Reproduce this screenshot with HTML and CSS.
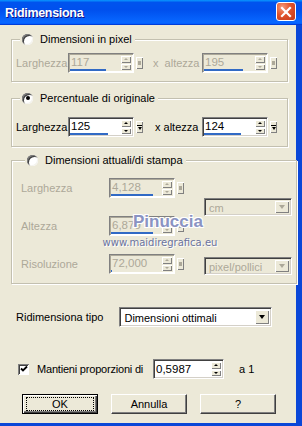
FILE: index.html
```html
<!DOCTYPE html>
<html>
	<head>
		<meta charset="utf-8">
		<title>Ridimensiona</title>
		<link rel="stylesheet" href="styles.css">
	</head>
	<body>
		<div class="window">
			<div class="titlebar">
				<span class="title">Ridimensiona</span>
				<span class="close">
					<svg width="12" height="12" viewBox="0 0 12 12"><path d="M2 2 L10 10 M10 2 L2 10" stroke="#fff" stroke-width="2.2" stroke-linecap="square"/></svg>
				</span>
			</div>
			<div class="dialog">
				<fieldset class="group g1 off">
					<legend><span class="radio"></span>Dimensioni in pixel</legend>
					<div class="row">
						<span class="lbl">Larghezza</span>
						<span class="spinbox">
							<span class="field"><span class="cell"><span class="val">117</span><span class="bar" style="width: 36px;"></span></span><span class="spin"><i class="up"></i><i class="dn"></i></span></span>
							<span class="pop"><i class="sq"></i></span>
						</span>
						<span class="xlbl">x&nbsp;&nbsp;altezza</span>
						<span class="spinbox">
							<span class="field"><span class="cell"><span class="val">195</span><span class="bar" style="width: 39px;"></span></span><span class="spin"><i class="up"></i><i class="dn"></i></span></span>
							<span class="pop"><i class="sq"></i></span>
						</span>
					</div>
				</fieldset>

				<fieldset class="group g2">
					<legend><span class="radio on"></span>Percentuale di originale</legend>
					<div class="row">
						<span class="lbl">Larghezza</span>
						<span class="spinbox">
							<span class="field"><span class="cell"><span class="val">125</span><span class="bar" style="width: 38px;"></span></span><span class="spin"><i class="up"></i><i class="dn"></i></span></span>
							<span class="pop"><i class="tri"></i></span>
						</span>
						<span class="xlbl x2">x altezza</span>
						<span class="spinbox">
							<span class="field"><span class="cell"><span class="val">124</span><span class="bar" style="width: 37px;"></span></span><span class="spin"><i class="up"></i><i class="dn"></i></span></span>
							<span class="pop"><i class="tri"></i></span>
						</span>
					</div>
				</fieldset>

				<fieldset class="group g3 off">
					<legend><span class="radio"></span>Dimensioni attuali/di stampa</legend>
					<div class="grid">
						<span class="lbl">Larghezza</span>
						<span class="spinbox">
							<span class="field"><span class="cell"><span class="val">4,128</span><span class="bar" style="width: 42px;"></span></span><span class="spin"><i class="up"></i><i class="dn"></i></span></span>
							<span class="pop"><i class="sq"></i></span>
						</span>
						<span class="combo unit"><span class="ctext">cm</span><span class="cbtn"><i></i></span></span>

						<span class="lbl">Altezza</span>
						<span class="spinbox">
							<span class="field"><span class="cell"><span class="val">6,879</span><span class="bar" style="width: 42px;"></span></span><span class="spin"><i class="up"></i><i class="dn"></i></span></span>
							<span class="pop"><i class="sq"></i></span>
						</span>

						<span class="lbl">Risoluzione</span>
						<span class="spinbox">
							<span class="field"><span class="cell"><span class="val">72,000</span><span class="bar" style="width: 1px;"></span></span><span class="spin"><i class="up"></i><i class="dn"></i></span></span>
							<span class="pop"><i class="sq"></i></span>
						</span>
						<span class="combo res"><span class="ctext">pixel/pollici</span><span class="cbtn"><i></i></span></span>
					</div>
				</fieldset>

				<div class="tipo">
					<span>Ridimensiona tipo</span>
					<span class="combo on"><span class="ctext">Dimensioni ottimali</span><span class="cbtn"><i></i></span></span>
				</div>

				<div class="prop">
					<span class="check">
						<svg width="8" height="8" viewBox="0 0 8 8"><path d="M1 3.5 L3 5.5 L7 1.5" fill="none" stroke="#000" stroke-width="1.8"/></svg>
					</span>
					<span class="plbl">Mantieni proporzioni di</span>
					<span class="field ratio"><span class="cell"><span class="val">0,5987</span></span><span class="spin"><i class="up"></i><i class="dn"></i></span></span>
					<span class="a1">a 1</span>
				</div>

				<div class="buttons">
					<button class="btn default"><span>OK</span></button>
					<button class="btn"><span>Annulla</span></button>
					<button class="btn"><span>?</span></button>
				</div>

				<div class="mark">
					<div class="mname">Pinuccia</div>
					<div class="murl">www.maidiregrafica.eu</div>
				</div>
			</div>
		</div>
	</body>
</html>
```

FILE: styles.css
```css
body {
	margin: 0;
	font-family: "Liberation Sans", Arial, sans-serif;
	font-size: 11px;
	color: #000;
}

.window {
	width: 302px;
	height: 426px;
	display: flex;
	flex-direction: column;
	background: #0a47d8;
}

/* title bar */
.titlebar {
	height: 25px;
	flex: none;
	display: flex;
	align-items: center;
	justify-content: space-between;
	background: linear-gradient(180deg, #0997ff, #0053ee 10%, #0050ee 40%, #0766ff 86%, #0766ff 92%, #005bff 95%, #003dd7 97%, #003dd7);
}

.title {
	padding-left: 5px;
	color: #fff;
	font-weight: bold;
	font-size: 12.5px;
	letter-spacing: -0.3px;
	text-shadow: 1px 1px 0 #0f1089;
}

.close {
	width: 18px;
	height: 17px;
	margin-right: 6px;
	margin-top: -2px;
	border: 1px solid #fff;
	border-radius: 3px;
	display: flex;
	align-items: center;
	justify-content: center;
	background: radial-gradient(circle at 30% 25%, #f39a7a, #e0532a 45%, #c2381a);
}

/* dialog body */
.dialog {
	position: relative;
	flex: 1;
	background: #ece9d8;
	border-right: 6px solid #0a47d8;
	border-bottom: 3px solid #0a47d8;
	padding-top: 7px;
}

.group {
	margin: 0 8px 0 11px;
	padding: 7px 4px 8px 4px;
	border: 1px solid #c3c0b0;
	box-shadow: inset 1px 1px 0 #fff, 1px 1px 0 #fff;
}

.group legend {
	display: flex;
	align-items: center;
	height: 14px;
	margin-left: 4px;
	padding: 0 3px 0 2px;
	background: #ece9d8;
}

.g2 {
	margin-top: 9px;
	padding-top: 12px;
	padding-bottom: 9px;
}

.g3 {
	margin-top: 6px;
	padding: 11px 4px 9px 9px;
}

.radio {
	width: 11px;
	height: 11px;
	margin-right: 7px;
	border-radius: 50%;
	background: #fff;
	box-shadow: inset 1px 1px 0 #808080, inset -1px -1px 0 #f4f3ee, inset 2px 2px 0 #404040;
	display: flex;
	align-items: center;
	justify-content: center;
}

.radio.on::after {
	content: "";
	width: 4px;
	height: 4px;
	border-radius: 50%;
	background: #000;
}

.row {
	display: flex;
	align-items: center;
}

.lbl {
	width: 52px;
}

.xlbl {
	width: 49px;
	margin-left: 10px;
}

.xlbl.x2 {
	margin-left: 12px;
	width: 47px;
}

.off .lbl, .off .xlbl, .off .val, .off .ctext {
	color: #aca899;
}

/* edit field with spinner and slider bar */
.spinbox {
	display: flex;
	align-items: center;
}

.field {
	width: 66px;
	height: 20px;
	box-sizing: border-box;
	display: flex;
	background: #fff;
	border: 1px solid;
	border-color: #808080 #fff #fff #808080;
	box-shadow: inset 1px 1px 0 #404040, inset -1px -1px 0 #d4d0c8;
	padding: 1px;
}

.off .field {
	background: #ece9d8;
	box-shadow: inset 1px 1px 0 #aca899, inset -1px -1px 0 #fff;
}

.cell {
	flex: 1;
	display: flex;
	flex-direction: column;
}

.val {
	flex: 1;
	padding-left: 1px;
	line-height: 14px;
	font-size: 11.5px;
}

.bar {
	height: 2px;
	background: #316ac5;
}

.spin {
	width: 10px;
	display: flex;
	flex-direction: column;
	gap: 1px;
	padding: 1px 1px 1px 0;
}

.spin i {
	flex: 1;
	display: flex;
	align-items: center;
	justify-content: center;
	background: #ece9d8;
	box-shadow: inset 1px 1px 0 #fff, inset -1px -1px 0 #808080;
}

.spin i::after {
	content: "";
	border-left: 2px solid transparent;
	border-right: 2px solid transparent;
}

.spin .up::after {
	border-bottom: 2px solid #000;
}

.spin .dn::after {
	border-top: 2px solid #000;
}

.off .spin .up::after {
	border-bottom-color: #aca899;
}

.off .spin .dn::after {
	border-top-color: #aca899;
}

.pop {
	width: 7px;
	height: 12px;
	margin-left: 2px;
	display: flex;
	flex-direction: column;
	align-items: center;
	justify-content: center;
	background: #ece9d8;
	box-shadow: inset 1px 1px 0 #fff, inset -1px -1px 0 #808080;
}

.pop .sq {
	width: 3px;
	height: 4px;
	background: #aca899;
}

.pop .tri {
	width: 5px;
	border-top: 1px solid #000;
	display: flex;
	justify-content: center;
	padding-top: 1px;
}

.pop .tri::after {
	content: "";
	border-left: 2.5px solid transparent;
	border-right: 2.5px solid transparent;
	border-top: 3px solid #000;
}

/* print size grid */
.grid {
	display: grid;
	grid-template-columns: 69px 76px 88px;
	grid-template-rows: 20px 20px 20px;
	column-gap: 19px;
	row-gap: 18px;
	align-items: center;
}

.unit {
	grid-column: 3;
	grid-row: 1 / 3;
}

.res {
	grid-column: 3;
	grid-row: 3;
	margin-top: 4px;
}

/* combo boxes */
.combo {
	height: 18px;
	box-sizing: border-box;
	display: flex;
	align-items: stretch;
	border: 1px solid;
	border-color: #808080 #fff #fff #808080;
	box-shadow: inset 1px 1px 0 #404040, inset -1px -1px 0 #d4d0c8;
	padding: 2px;
}

.ctext {
	flex: 1;
	line-height: 14px;
	padding-left: 2px;
}

.cbtn {
	width: 14px;
	display: flex;
	align-items: center;
	justify-content: center;
	background: #ece9d8;
	box-shadow: inset 1px 1px 0 #fff, inset -1px -1px 0 #808080;
}

.cbtn i {
	border-left: 3.5px solid transparent;
	border-right: 3.5px solid transparent;
	border-top: 4px solid #aca899;
}

.combo.on {
	width: 153px;
	height: 20px;
	margin-left: 16px;
	background: #fff;
}

.combo.on .ctext {
	line-height: 16px;
}

.combo.on .cbtn i {
	border-top-color: #000;
}

.tipo {
	display: flex;
	align-items: center;
	margin-top: 23px;
	padding-left: 16px;
}

/* keep proportions row */
.prop {
	display: flex;
	align-items: center;
	margin-top: 32px;
	padding-left: 18px;
}

.check {
	width: 11px;
	height: 11px;
	box-sizing: border-box;
	display: flex;
	align-items: center;
	justify-content: center;
	background: #fff;
	box-shadow: inset 1px 1px 0 #808080, inset -1px -1px 0 #fff, inset 2px 2px 0 #404040;
}

.plbl {
	margin-left: 8px;
	width: 116px;
	letter-spacing: -0.2px;
}

.field.ratio {
	width: 71px;
}

.field.ratio .val {
	line-height: 16px;
}

.a1 {
	margin-left: 15px;
}

/* buttons */
.buttons {
	display: flex;
	gap: 13px;
	margin-top: 15px;
	padding-left: 22px;
}

.btn {
	width: 76px;
	height: 20px;
	padding: 0;
	font-family: "Liberation Sans", Arial, sans-serif;
	font-size: 11px;
	color: #000;
	background: #ece9d8;
	border: 1px solid;
	border-color: #fff #404040 #404040 #fff;
	box-shadow: inset -1px -1px 0 #808080;
	display: flex;
	align-items: center;
	justify-content: center;
}

.btn.default {
	border: 1px solid #000;
	box-shadow: inset 1px 1px 0 #fff, inset -1px -1px 0 #404040, inset -2px -2px 0 #808080;
}

.btn.default span {
	width: 66px;
	height: 12px;
	line-height: 12px;
	border: 1px dotted #000;
}

/* watermark */
.mark {
	position: absolute;
	left: 97px;
	top: 187px;
	width: 126px;
	text-align: center;
	pointer-events: none;
}

.mname {
	padding-left: 16px;
	font-family: "Liberation Sans", sans-serif;
	font-weight: bold;
	font-size: 17px;
	line-height: 20px;
	color: #8a93c2;
	text-shadow: -1px -1px 0 #fff, 1px -1px 0 #fff, -1px 1px 0 #fff, 1px 1px 0 #fff;
}

.murl {
	margin-top: 5px;
	font-family: "DejaVu Sans", sans-serif;
	font-size: 10px;
	color: #6a739e;
	text-shadow: 1px 1px 0 #fff;
}
```
